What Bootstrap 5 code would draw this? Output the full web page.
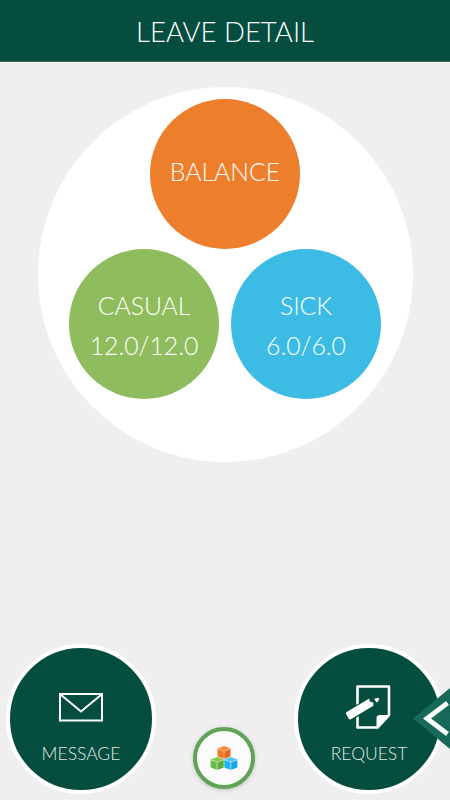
<!DOCTYPE html>
<html lang="en">
<head>
<meta charset="utf-8">
<meta name="viewport" content="width=device-width, initial-scale=1">
<title>Leave Detail</title>
<link href="https://cdn.jsdelivr.net/npm/bootstrap@5.3.0/dist/css/bootstrap.min.css" rel="stylesheet">
<style>
body { background: #efefef; font-family: Lato, "Open Sans", sans-serif; font-weight: 300; }
.screen { height: 800px; }
.topbar { height: 62px; background: #054d3f; border-bottom: 1px solid #3e6e63; padding-top: 3px; }
.topbar h1 { font-size: 27.500px; font-weight: 300; line-height: 36px; }
.dial { width: 375px; height: 375px; margin-top: 25px; padding-top: 12px; }
.bubble { width: 150px; height: 150px; font-size: 24.800px; line-height: 40px; }
.bubble-row { gap: 12px; }
.orange { background: #ed7e2b; padding-bottom: 5px; }
.green { background: #8fbc5c; padding-top: 3px; }
.blue { background: #3cbbe4; padding-top: 3px; }
.actions { padding: 0 6px 6px; }
.action { width: 150px; height: 150px; border: 4px solid #fff; background: #054d3f; font-size: 17.500px; line-height: 24px; color: #e3e8e2; padding-bottom: 24px; }
.hub { width: 62px; height: 62px; border: 4px solid #60a557; background: #fbfbfb; box-shadow: 0 1px 4px rgba(0,0,0,.2); margin: 0 2px 5px 0; }
.drawer { top: 687px; right: 0; }
</style>
<script src="https://cdn.jsdelivr.net/npm/bootstrap@5.3.0/dist/js/bootstrap.bundle.min.js"></script>
</head>
<body>
<div class="screen d-flex flex-column position-relative overflow-hidden">
  <header class="topbar d-flex align-items-center justify-content-center text-white">
    <h1 class="m-0">LEAVE DETAIL</h1>
  </header>
  <main class="dial rounded-circle bg-white mx-auto d-flex flex-column align-items-center flex-shrink-0">
    <div class="bubble orange rounded-circle text-white d-flex align-items-center justify-content-center">BALANCE</div>
    <div class="bubble-row d-flex">
      <div class="bubble green rounded-circle text-white d-flex flex-column align-items-center justify-content-center"><span>CASUAL</span><span>12.0/12.0</span></div>
      <div class="bubble blue rounded-circle text-white d-flex flex-column align-items-center justify-content-center"><span>SICK</span><span>6.0/6.0</span></div>
    </div>
  </main>
  <footer class="actions mt-auto d-flex justify-content-between align-items-end">
    <a href="#" class="action rounded-circle text-decoration-none d-flex flex-column align-items-center justify-content-end">
      <svg class="mb-auto" width="46" height="76" viewBox="0 0 46 76" fill="none" stroke="#fff" stroke-width="2">
        <path d="M2 46h42v26.500H2z"/><path d="M2.500 46.500L23 63.500 43.500 46.500"/>
      </svg>
      <span>MESSAGE</span>
    </a>
    <a href="#" class="hub rounded-circle d-flex align-items-center justify-content-center" aria-label="Home">
      <svg width="28" height="26" viewBox="0 0 28 26">
        <g transform="translate(0 1)"><path fill="#f58b3f" d="M14 0l6.500 2.500L14 5 7.500 2.500z"/><path fill="#ef7622" d="M7.500 2.500L14 5v8l-6.500-2.500z"/><path fill="#e56b1c" d="M20.500 2.500L14 5v8l6.500-2.500z"/><path d="M7.500 2.800L14 5.200l6.500-2.400M14 5.200V13" fill="none" stroke="#fbc49c" stroke-width=".8"/></g>
        <g transform="translate(-6.800 12)"><path fill="#83c650" d="M14 0l6.500 2.500L14 5 7.500 2.500z"/><path fill="#6abc45" d="M7.500 2.500L14 5v8l-6.500-2.500z"/><path fill="#5aae3b" d="M20.500 2.500L14 5v8l6.500-2.500z"/><path d="M7.500 2.800L14 5.200l6.500-2.400M14 5.200V13" fill="none" stroke="#c4e6ae" stroke-width=".8"/></g>
        <g transform="translate(6.800 12)"><path fill="#4cc3f4" d="M14 0l6.500 2.500L14 5 7.500 2.500z"/><path fill="#1db2f1" d="M7.500 2.500L14 5v8l-6.500-2.500z"/><path fill="#16a5e8" d="M20.500 2.500L14 5v8l6.500-2.500z"/><path d="M7.500 2.800L14 5.200l6.500-2.400M14 5.200V13" fill="none" stroke="#b0e5fb" stroke-width=".8"/></g>
      </svg>
    </a>
    <a href="#" class="action rounded-circle text-decoration-none d-flex flex-column align-items-center justify-content-end">
      <svg class="mb-auto" width="46" height="83" viewBox="0 0 46 83">
        <path d="M11.500 38.500h31.500v28.500L31.500 79.500h-20z" fill="none" stroke="#fff" stroke-width="2.600" stroke-linejoin="round"/>
        <path d="M30.500 79.500v-9.500q0-3 3.500-3h9.500z" fill="#fff"/>
        <g transform="translate(1.500 68.500) rotate(-31)"><path d="M5-5.500h22V5.500H5z" fill="#054d3f"/><path d="M2-4.200h26l-1.200 2.700 2.500 2.700-1.600 3H2Q0 4.200 0 2.200v-4.400q0-2 2-2z" fill="#fff"/></g>
        <path d="M28.200 50.700q2.500-1 5-.5.500 1-2 4.300-2-1-3-3.800z" fill="#fff"/>
      </svg>
      <span>REQUEST</span>
    </a>
  </footer>
  <svg class="drawer position-absolute" width="37" height="63" viewBox="0 0 37 63" role="img" aria-label="Open drawer">
    <path d="M0 31.500L37 1v61z" fill="#17695a"/>
    <path d="M34.500 16L14 31.500l20.500 15.500" fill="none" stroke="#fff" stroke-width="4.800"/>
  </svg>
</div>
</body>
</html>
